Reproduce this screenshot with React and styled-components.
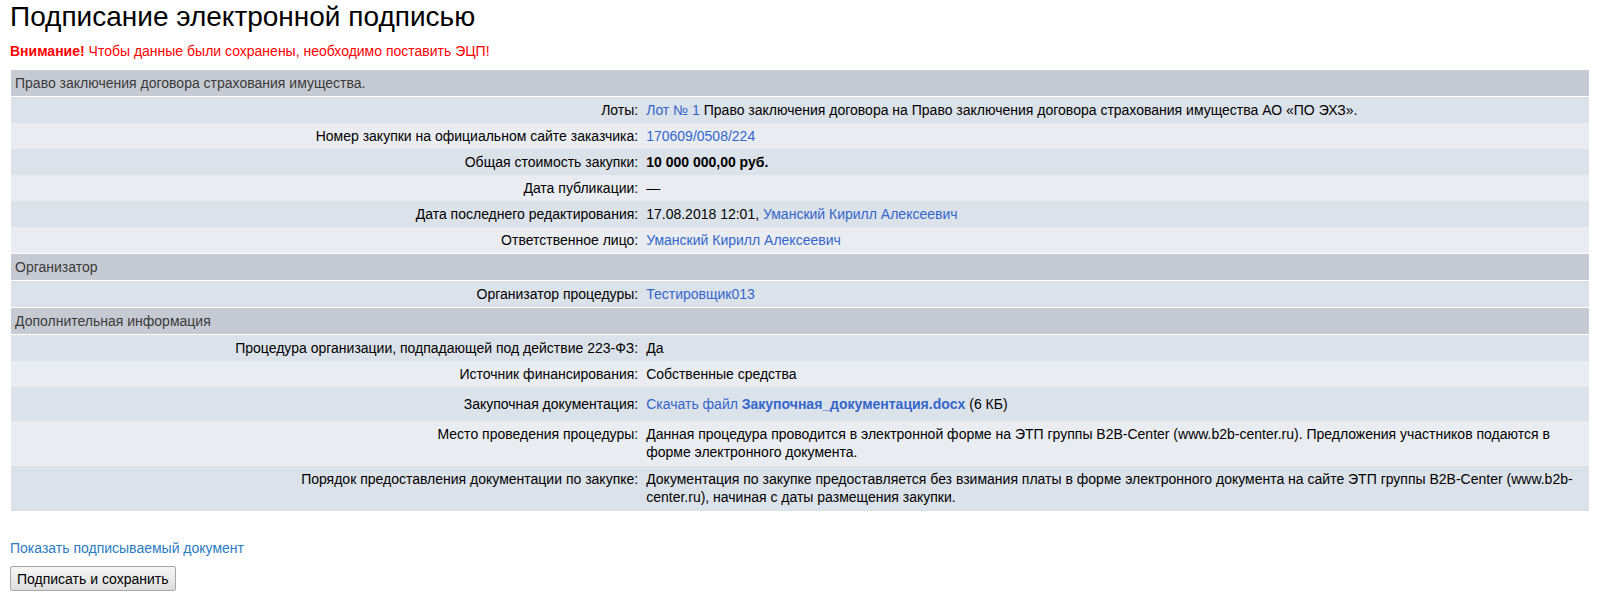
import styled, { createGlobalStyle } from "styled-components";

const GlobalStyle = createGlobalStyle`
  body {
    margin: 0;
    background: #fff;
    font-family: "Liberation Sans", Arial, sans-serif;
    font-size: 14px;
    color: #000;
  }
`;

const Page = styled.div`
  padding: 0 10px 0 10px;
`;

const Title = styled.h1`
  margin: 1px 0 0;
  font-size: 28px;
  font-weight: normal;
  line-height: 32px;
`;

const Warning = styled.p`
  margin: 10px 0 0;
  line-height: 16px;
  color: #ff0000;
  b {
    color: #f00;
  }
`;

const Table = styled.table`
  width: calc(100% - 1px);
  margin: 10px 0 0 1px;
  border-collapse: collapse;
  line-height: 18px;
`;

const Section = styled.tr`
  background: #c6cbd3;
  border-top: 1px solid #fff;
  border-bottom: 1px solid #fff;
  td {
    padding: 4px 4px;
    color: #3a3a3a;
  }
`;

const Row = styled.tr`
  background: ${(p) => (p.$odd ? "#dce2e9" : "#e9edf1")};
`;

const Label = styled.td`
  width: 40%;
  text-align: right;
  vertical-align: top;
  padding: ${(p) => (p.$tall ? "8px" : "4px")} 4px;
  white-space: nowrap;
`;

const Value = styled.td`
  vertical-align: top;
  padding: ${(p) => (p.$tall ? "8px 12px 7px 4px" : p.$multi ? "4px 12px 5px 4px" : "4px 12px 4px 4px")};
`;

const A = styled.a`
  color: #3366cc;
  text-decoration: none;
  font-weight: ${(p) => (p.$bold ? "bold" : "normal")};
`;

const ShowLink = styled.a`
  display: inline-block;
  margin-top: 29px;
  color: #2b7bc3;
  text-decoration: none;
  line-height: 16px;
`;

const Actions = styled.div`
  margin-top: 10px;
`;

const Button = styled.button`
  height: 25px;
  padding: 0 6px;
  font-family: "Liberation Sans", Arial, sans-serif;
  font-size: 14px;
  color: #000;
  background: linear-gradient(#f6f6f6, #dedede);
  border: 1px solid #a8a8a8;
  border-radius: 2px;
`;

const sections = [
  {
    title: "Право заключения договора страхования имущества.",
    rows: [
      ["Лоты", <><A href="#">Лот № 1</A> Право заключения договора на Право заключения договора страхования имущества АО «ПО ЭХЗ».</>],
      ["Номер закупки на официальном сайте заказчика", <A href="#">170609/0508/224</A>],
      ["Общая стоимость закупки", <b>10 000 000,00 руб.</b>],
      ["Дата публикации", "—"],
      ["Дата последнего редактирования", <>17.08.2018 12:01, <A href="#">Уманский Кирилл Алексеевич</A></>],
      ["Ответственное лицо", <A href="#">Уманский Кирилл Алексеевич</A>],
    ],
  },
  {
    title: "Организатор",
    rows: [["Организатор процедуры", <A href="#">Тестировщик013</A>]],
  },
  {
    title: "Дополнительная информация",
    rows: [
      ["Процедура организации, подпадающей под действие 223-ФЗ", "Да"],
      ["Источник финансирования", "Собственные средства"],
      ["Закупочная документация", <><A href="#">Скачать файл</A> <A href="#" $bold>Закупочная_документация.docx</A> (6 КБ)</>, "tall"],
      ["Место проведения процедуры", "Данная процедура проводится в электронной форме на ЭТП группы B2B-Center (www.b2b-center.ru). Предложения участников подаются в форме электронного документа.", "multi"],
      ["Порядок предоставления документации по закупке", "Документация по закупке предоставляется без взимания платы в форме электронного документа на сайте ЭТП группы B2B-Center (www.b2b-center.ru), начиная с даты размещения закупки.", "multi"],
    ],
  },
];

export default function App() {
  return (
    <Page>
      <GlobalStyle />
      <Title>Подписание электронной подписью</Title>
      <Warning>
        <b>Внимание!</b> Чтобы данные были сохранены, необходимо поставить ЭЦП!
      </Warning>
      <Table>
        <tbody>
          {sections.map((s) => [
            <Section key={s.title}>
              <td colSpan={2}>{s.title}</td>
            </Section>,
            ...s.rows.map(([label, value, kind], i) => (
              <Row key={label} $odd={i % 2 === 0}>
                <Label $tall={kind === "tall"}>{label}:</Label>
                <Value $tall={kind === "tall"} $multi={kind === "multi"}>
                  {value}
                </Value>
              </Row>
            )),
          ])}
        </tbody>
      </Table>
      <ShowLink href="#">Показать подписываемый документ</ShowLink>
      <Actions>
        <Button>Подписать и сохранить</Button>
      </Actions>
    </Page>
  );
}
